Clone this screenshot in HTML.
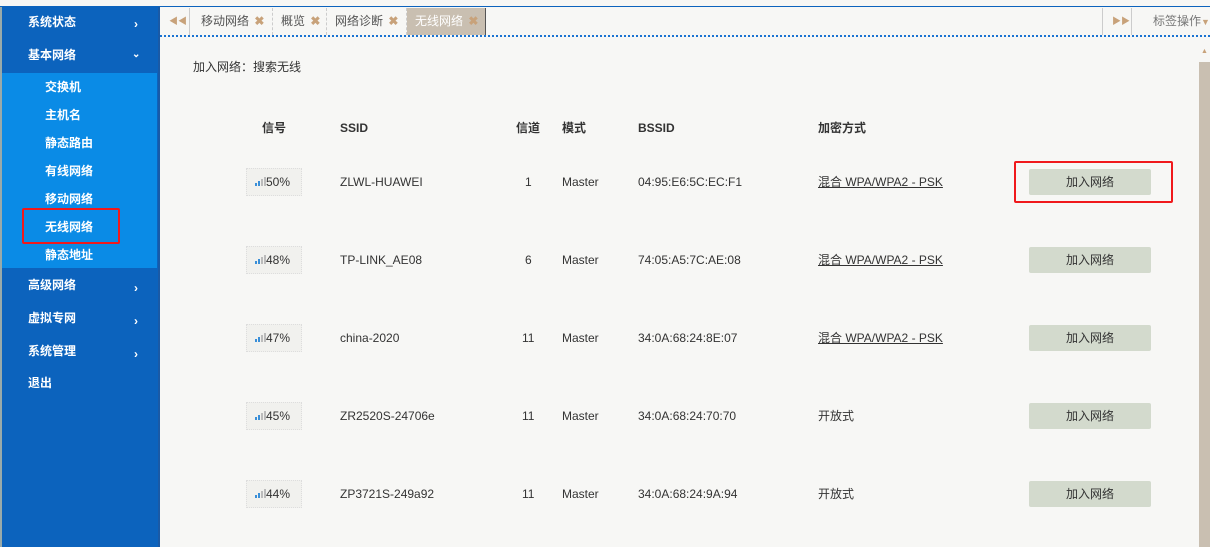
<!DOCTYPE html>
<html><head><meta charset="utf-8"><style>
*{margin:0;padding:0;box-sizing:border-box}
body{width:1210px;height:547px;overflow:hidden;background:#f7f7f5;font-family:"Liberation Sans","Noto Sans CJK SC",sans-serif;font-size:12px;color:#333;position:relative}
.abs{position:absolute}
#top{left:0;top:0;width:1210px;height:7px;background:#f7f7f5;border-bottom:1px solid #0c63bd}
#side{left:0;top:7px;width:160px;height:540px;background:#0c63bd;border-left:2px solid #9aa;border-right:2px solid #1a5aa6}
.m{position:absolute;left:26px;color:#fff;font-weight:bold;font-size:12px;line-height:16px}
.ar{position:absolute;left:132px;color:#fff;font-size:12px;line-height:16px;font-weight:bold}
#sub{left:2px;top:73px;width:155px;height:195px;background:#0a8be6}
.s{position:absolute;left:43px;color:#fff;font-size:12px;line-height:16px;font-weight:600}
#tabs{left:160px;top:8px;width:1050px;height:29px;background:#f7f7f5;border-bottom:2px dotted #1a73d2}
.tab{position:absolute;top:0;height:27px;line-height:26px;color:#555;font-size:12px;padding-left:8px;border-right:1px dashed #ccc}
.x{color:#c8a27a;font-weight:bold;margin-left:2px}
.h{position:absolute;top:120px;font-weight:bold;color:#333;font-size:12px;line-height:16px}
.c{position:absolute;font-size:12px;color:#333;line-height:16px}
.sig{position:absolute;left:246px;width:56px;height:28px;border:1px dotted #ddd;background:#f1f1ee;font-size:12px;line-height:26px;padding-left:8px}
.btn{position:absolute;left:1029px;width:122px;height:26px;background:#d3dacd;border-radius:2px;text-align:center;line-height:26px;color:#333}
.u{text-decoration:underline}
</style></head><body>
<div id="top" class="abs"></div>
<div id="side" class="abs">
<div class="m" style="top:7px">系统状态</div><div class="ar" style="top:9px">›</div>
<div class="m" style="top:40px">基本网络</div><div class="ar" style="top:40px;font-size:10px;left:130px">⌄</div>
<div class="m" style="top:270px">高级网络</div><div class="ar" style="top:273px">›</div>
<div class="m" style="top:303px">虚拟专网</div><div class="ar" style="top:306px">›</div>
<div class="m" style="top:336px">系统管理</div><div class="ar" style="top:339px">›</div>
<div class="m" style="top:368px">退出</div>
</div>
<div id="sub" class="abs">
<div class="s" style="top:6px">交换机</div>
<div class="s" style="top:34px">主机名</div>
<div class="s" style="top:62px">静态路由</div>
<div class="s" style="top:90px">有线网络</div>
<div class="s" style="top:118px">移动网络</div>
<div class="s" style="top:146px">无线网络</div>
<div class="s" style="top:174px">静态地址</div>
</div>
<div class="abs" style="left:22px;top:208px;width:98px;height:36px;border:2px solid #f0191c;border-radius:2px"></div>
<div id="tabs" class="abs">
<div class="tab" style="left:0;width:30px;padding-left:9px;color:#c8a27a;border-right:1px solid #ccc;font-size:9px">◀◀</div>
<div class="tab" style="left:31px;width:82px;padding-left:10px">移动网络 <span class="x">✖</span></div>
<div class="tab" style="left:113px;width:54px">概览 <span class="x">✖</span></div>
<div class="tab" style="left:167px;width:80px">网络诊断 <span class="x">✖</span></div>
<div class="tab" style="left:247px;width:79px;background:#c9bfb1;color:#fff;border-right:1px solid #555">无线网络 <span class="x">✖</span></div>
<div class="tab" style="left:942px;width:30px;border-left:1px solid #ccc;border-right:1px solid #ccc;color:#c8a27a;font-size:9px;padding-left:9px">▶▶</div>
<div class="tab" style="left:985px;width:65px;color:#777;border:none">标签操作<span style="color:#c8a27a;font-size:9px">▼</span></div>
</div>
<div class="abs" style="left:1199px;top:48px;width:11px;height:8px;color:#c8a27a;font-size:7px;text-align:center">▲</div>
<div class="abs" style="left:1199px;top:62px;width:11px;height:485px;background:#c9bfb1"></div>
<div class="c" style="left:193px;top:59px">加入网络：搜索无线</div>
<div class="h" style="left:262px">信号</div>
<div class="h" style="left:340px">SSID</div>
<div class="h" style="left:516px">信道</div>
<div class="h" style="left:562px">模式</div>
<div class="h" style="left:638px">BSSID</div>
<div class="h" style="left:818px">加密方式</div>

<div class="sig" style="top:168px"><svg width="11" height="9"><rect x="0" y="6" width="2" height="3" fill="#3a8fd8"/><rect x="3" y="4" width="2" height="5" fill="#3a8fd8"/><rect x="6" y="2" width="2" height="7" fill="#bbb"/><rect x="9" y="0" width="2" height="9" fill="#bbb"/></svg>50%</div>
<div class="c" style="left:340px;top:174px">ZLWL-HUAWEI</div><div class="c" style="left:525px;top:174px">1</div><div class="c" style="left:562px;top:174px">Master</div><div class="c" style="left:638px;top:174px">04:95:E6:5C:EC:F1</div><div class="c u" style="left:818px;top:174px">混合 WPA/WPA2 - PSK</div><div class="btn" style="top:169px">加入网络</div>
<div class="abs" style="left:1014px;top:161px;width:159px;height:42px;border:2px solid #f0191c;border-radius:2px"></div>

<div class="sig" style="top:246px"><svg width="11" height="9"><rect x="0" y="6" width="2" height="3" fill="#3a8fd8"/><rect x="3" y="4" width="2" height="5" fill="#3a8fd8"/><rect x="6" y="2" width="2" height="7" fill="#bbb"/><rect x="9" y="0" width="2" height="9" fill="#bbb"/></svg>48%</div>
<div class="c" style="left:340px;top:252px">TP-LINK_AE08</div><div class="c" style="left:525px;top:252px">6</div><div class="c" style="left:562px;top:252px">Master</div><div class="c" style="left:638px;top:252px">74:05:A5:7C:AE:08</div><div class="c u" style="left:818px;top:252px">混合 WPA/WPA2 - PSK</div><div class="btn" style="top:247px">加入网络</div>

<div class="sig" style="top:324px"><svg width="11" height="9"><rect x="0" y="6" width="2" height="3" fill="#3a8fd8"/><rect x="3" y="4" width="2" height="5" fill="#3a8fd8"/><rect x="6" y="2" width="2" height="7" fill="#bbb"/><rect x="9" y="0" width="2" height="9" fill="#bbb"/></svg>47%</div>
<div class="c" style="left:340px;top:330px">china-2020</div><div class="c" style="left:522px;top:330px">11</div><div class="c" style="left:562px;top:330px">Master</div><div class="c" style="left:638px;top:330px">34:0A:68:24:8E:07</div><div class="c u" style="left:818px;top:330px">混合 WPA/WPA2 - PSK</div><div class="btn" style="top:325px">加入网络</div>

<div class="sig" style="top:402px"><svg width="11" height="9"><rect x="0" y="6" width="2" height="3" fill="#3a8fd8"/><rect x="3" y="4" width="2" height="5" fill="#3a8fd8"/><rect x="6" y="2" width="2" height="7" fill="#bbb"/><rect x="9" y="0" width="2" height="9" fill="#bbb"/></svg>45%</div>
<div class="c" style="left:340px;top:408px">ZR2520S-24706e</div><div class="c" style="left:522px;top:408px">11</div><div class="c" style="left:562px;top:408px">Master</div><div class="c" style="left:638px;top:408px">34:0A:68:24:70:70</div><div class="c" style="left:818px;top:408px">开放式</div><div class="btn" style="top:403px">加入网络</div>

<div class="sig" style="top:480px"><svg width="11" height="9"><rect x="0" y="6" width="2" height="3" fill="#3a8fd8"/><rect x="3" y="4" width="2" height="5" fill="#3a8fd8"/><rect x="6" y="2" width="2" height="7" fill="#bbb"/><rect x="9" y="0" width="2" height="9" fill="#bbb"/></svg>44%</div>
<div class="c" style="left:340px;top:486px">ZP3721S-249a92</div><div class="c" style="left:522px;top:486px">11</div><div class="c" style="left:562px;top:486px">Master</div><div class="c" style="left:638px;top:486px">34:0A:68:24:9A:94</div><div class="c" style="left:818px;top:486px">开放式</div><div class="btn" style="top:481px">加入网络</div>
</body></html>
